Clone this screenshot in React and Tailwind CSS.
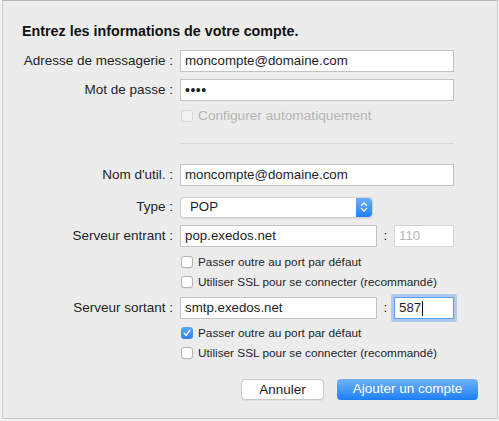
import React from "react"

const font = { fontFamily: '"Liberation Sans", Arial, sans-serif' }

function Label({ children }) {
  return (
    <div className="w-[177px] pr-[7px] text-right text-[13.5px] text-[#1f1f1f] leading-[22px] shrink-0 whitespace-nowrap">
      {children}
    </div>
  )
}

function TextField({ value, className = "", disabled = false }) {
  return (
    <div
      className={`h-[22px] border border-[#c3c3c3] bg-white px-[4px] text-[13.3px] leading-[20px] whitespace-nowrap ${
        disabled ? "text-[#b8b8b8]" : "text-[#1e1e1e]"
      } ${className}`}
    >
      {value}
    </div>
  )
}

function Checkbox({ checked = false, disabled = false, label, textClass = "text-[11.8px]" }) {
  return (
    <div className="ml-[178px] h-[16px] flex items-center gap-[5px]">
      {checked ? (
        <div className="w-[12px] h-[12px] rounded-[3px] bg-gradient-to-b from-[#5ea7fb] to-[#2c80f6] flex items-center justify-center">
          <svg width="8" height="8" viewBox="0 0 8 8">
            <path d="M1.2 4.3 L3.1 6.2 L6.8 1.4" fill="none" stroke="white" strokeWidth="1.5" strokeLinecap="round" strokeLinejoin="round" />
          </svg>
        </div>
      ) : (
        <div
          className={`w-[12px] h-[12px] rounded-[3px] border ${
            disabled ? "border-[#d8d8d8] bg-[#f2f2f2]" : "border-[#b3b3b3] bg-white shadow-[0_0.5px_0.5px_rgba(0,0,0,0.08)]"
          }`}
        />
      )}
      <span className={`${textClass} leading-[16px] whitespace-nowrap ${disabled ? "text-[#b5b5b5]" : "text-[#1f1f1f]"}`}>
        {label}
      </span>
    </div>
  )
}

function Row({ label, children, className = "" }) {
  return (
    <div className={`flex items-center ${className}`}>
      <Label>{label}</Label>
      {children}
    </div>
  )
}

function Stepper() {
  return (
    <div className="w-[16px] h-full rounded-r-[4px] bg-gradient-to-b from-[#69b0fb] to-[#1e7ff6] flex items-center justify-center">
      <svg width="8" height="12" viewBox="0 0 8 12">
        <path d="M1.5 4.5 L4 2 L6.5 4.5" fill="none" stroke="white" strokeWidth="1.3" strokeLinecap="round" strokeLinejoin="round" />
        <path d="M1.5 7.5 L4 10 L6.5 7.5" fill="none" stroke="white" strokeWidth="1.3" strokeLinecap="round" strokeLinejoin="round" />
      </svg>
    </div>
  )
}

export default function App() {
  return (
    <div className="w-[499px] h-[421px] bg-[#f5f5f5]" style={font}>
      <div className="ml-[2px] w-[496px] h-[419px] border border-t-[#b9b9b9] border-x-[#cacaca] border-b-[#c4c4c4] bg-[#ececec] flex flex-col">
        <div className="mt-[22px] pl-[19px] h-[16px] text-[14.3px] leading-[16px] font-bold text-[#111] whitespace-nowrap">
          Entrez les informations de votre compte.
        </div>

        <Row label="Adresse de messagerie :" className="mt-[11px]">
          <TextField value="moncompte@domaine.com" className="w-[274px]" />
        </Row>
        <Row label="Mot de passe :" className="mt-[7px]">
          <TextField value="••••" className="w-[274px] tracking-[0.5px] text-[14px]" />
        </Row>
        <div className="mt-[7px]">
          <Checkbox disabled label="Configurer automatiquement" textClass="text-[13.7px]" />
        </div>

        <div className="mt-[19px] ml-[177px] w-[274px] h-px bg-[#d8d8d8]" />

        <Row label="Nom d'util. :" className="mt-[20px]">
          <TextField value="moncompte@domaine.com" className="w-[274px]" />
        </Row>
        <Row label="Type :" className="mt-[10px]">
          <div className="w-[193px] h-[21px] rounded-[4px] bg-white border border-[#d0d0d0] shadow-[0_1px_1px_rgba(0,0,0,0.08)] flex items-center justify-between">
            <span className="pl-[9px] text-[13.3px] text-[#1e1e1e]">POP</span>
            <Stepper />
          </div>
        </Row>
        <Row label="Serveur entrant :" className="mt-[7px]">
          <TextField value="pop.exedos.net" className="w-[197px]" />
          <span className="w-[17px] text-center text-[13.5px] text-[#1f1f1f]">:</span>
          <TextField value="110" disabled className="w-[60px] border-[#d6d6d6]" />
        </Row>
        <div className="mt-[7px]">
          <Checkbox label="Passer outre au port par défaut" />
        </div>
        <div className="mt-[4px]">
          <Checkbox label="Utiliser SSL pour se connecter (recommandé)" />
        </div>

        <Row label="Serveur sortant :" className="mt-[7px]">
          <TextField value="smtp.exedos.net" className="w-[197px]" />
          <span className="w-[17px] text-center text-[13.5px] text-[#1f1f1f]">:</span>
          <div className="w-[60px] h-[22px] bg-white border border-[#5f9cec] rounded-[1px] shadow-[0_0_0_3px_rgba(122,173,240,0.55)] px-[4px] text-[13.3px] leading-[20px] text-[#1e1e1e] flex items-center">
            587
            <span className="ml-[1px] w-px h-[15px] bg-black" />
          </div>
        </Row>
        <div className="mt-[6px]">
          <Checkbox checked label="Passer outre au port par défaut" />
        </div>
        <div className="mt-[4px]">
          <Checkbox label="Utiliser SSL pour se connecter (recommandé)" />
        </div>

        <div className="mt-[18px] flex justify-end gap-[13px] pr-[19px]">
          <button className="w-[83px] h-[21px] rounded-[4px] bg-white border border-[#c8c8c8] shadow-[0_1px_1px_rgba(0,0,0,0.06)] text-[13.5px] text-[#1e1e1e]">
            Annuler
          </button>
          <button className="w-[141px] h-[21px] rounded-[4px] bg-gradient-to-b from-[#6db4fb] to-[#1a7ef6] text-[13.5px] text-white">
            Ajouter un compte
          </button>
        </div>
      </div>
    </div>
  )
}
